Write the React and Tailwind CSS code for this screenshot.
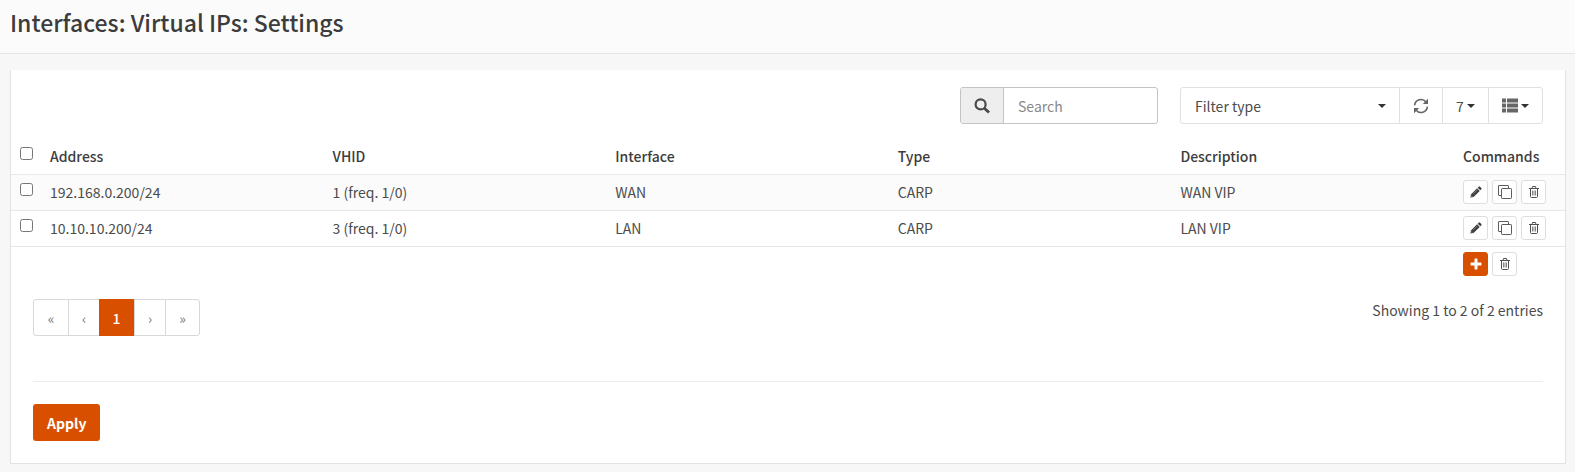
const th = "px-[5px] text-left font-medium";
const td = "px-[5px] border-t border-[#e8e8e8]";

const rows = [
  { address: "192.168.0.200/24", vhid: "1 (freq. 1/0)", iface: "WAN", type: "CARP", description: "WAN VIP" },
  { address: "10.10.10.200/24", vhid: "3 (freq. 1/0)", iface: "LAN", type: "CARP", description: "LAN VIP" },
];

function SearchIcon() {
  return (
    <svg viewBox="0 0 16 16" className="size-4" fill="none" stroke="#4a4a4a" aria-hidden="true">
      <circle cx="6.6" cy="6.4" r="5" strokeWidth="2.2" />
      <path d="M10.4 10.2 15 14.6" strokeWidth="2.8" />
    </svg>
  );
}

function RefreshIcon() {
  return (
    <svg viewBox="0 0 16 16" className="size-4" fill="none" stroke="#666" strokeWidth="1.6" aria-hidden="true">
      <path d="M1.6 7.4A6.4 6.4 0 0 1 13 4" />
      <path d="M14.4 8.6A6.4 6.4 0 0 1 3 12" />
      <path d="M15 .8V6H9.8Z" fill="#666" stroke="none" />
      <path d="M1 15.2V10H6.2Z" fill="#666" stroke="none" />
    </svg>
  );
}

function ListIcon() {
  return (
    <svg viewBox="0 0 16 15" className="h-[15px] w-4" fill="#666" aria-hidden="true">
      <path d="M0 .5h4v4H0zM5 .5h11v4H5zM0 5.5h4v4H0zM5 5.5h11v4H5zM0 10.5h4v4H0zM5 10.5h11v4H5z" />
    </svg>
  );
}

function Caret() {
  return (
    <svg viewBox="0 0 8 4" className="h-1 w-2" fill="#333" aria-hidden="true">
      <path d="M0 0h8L4 4Z" />
    </svg>
  );
}

function PencilIcon() {
  return (
    <svg viewBox="0 0 12 12" className="size-3" fill="#3c3c3c" aria-hidden="true">
      <path d="M8.7.7a.9.9 0 0 1 1.3 0l1.3 1.3a.9.9 0 0 1 0 1.3l-1 1L7.7 1.7Z" />
      <path d="M7.1 2.3 9.7 4.9 3.5 11.1.4 11.6.9 8.5ZM1.7 9.2l-.2 1.3 1.2-.2Z" fillRule="evenodd" />
      <path d="M3.2 8 7.4 3.8" stroke="#aaa" strokeWidth=".6" />
    </svg>
  );
}

function CloneIcon() {
  return (
    <svg viewBox="0 0 14 14" className="size-[14px]" fill="none" stroke="#5c5c5c" strokeWidth="1" aria-hidden="true">
      <path d="M3.5 10.5H1a.5.5 0 0 1-.5-.5V1A.5.5 0 0 1 1 .5h9a.5.5 0 0 1 .5.5v2.500" />
      <rect x="3.5" y="3.5" width="10" height="10" rx=".7" />
    </svg>
  );
}

function TrashIcon() {
  return (
    <svg viewBox="0 0 12 12" className="size-3" fill="none" stroke="#505050" aria-hidden="true">
      <path d="M1 2.500h10M4 2.4 4.500.5h3L8 2.400" />
      <path d="M2.500 2.800v7.600c0 .6.4 1.100 1 1.100h5c.6 0 1-.5 1-1.100V2.800" />
      <path d="M4.500 4.500v5M6 4.500v5M7.500 4.500v5" strokeWidth=".7" />
    </svg>
  );
}

function PlusIcon() {
  return (
    <svg viewBox="0 0 12 12" className="size-3" fill="#fff" aria-hidden="true">
      <path d="M4.5 1.2q0-.6.6-.6h1.8q.6 0 .6.6v3.3h3.3q.6 0 .6.6v1.8q0 .6-.6.6H7.5v3.3q0 .6-.6.6H5.1q-.6 0-.6-.6V7.5H1.2q-.6 0-.6-.6V5.1q0-.6.6-.6h3.3z" />
    </svg>
  );
}

function IconButton({ label, primary, children }) {
  return (
    <button
      type="button"
      aria-label={label}
      className={
        "flex h-6 w-[25px] items-center justify-center rounded-[3px] border " +
        (primary ? "border-[#d94f00] bg-[#d94f00]" : "border-[#dedede] bg-white")
      }
    >
      {children}
    </button>
  );
}

function Check({ label }) {
  return <input type="checkbox" aria-label={label} className="mb-[5px] block size-[13px]" />;
}

function PageButton({ label, wide, children }) {
  return (
    <button
      type="button"
      aria-label={label}
      className={"h-full border-l border-[#d8d8d8] text-[#777] first:border-l-0 " + (wide ? "w-[34px]" : "w-[31px]")}
    >
      {children}
    </button>
  );
}

export default function App() {
  return (
    <div className="min-h-screen bg-[#f7f7f7] pb-2 font-['Noto_Sans_CJK_SC','Noto_Sans',sans-serif] text-[14px] leading-5 text-[#4c4c4c]">
      <header className="border-b border-[#e6e6e6] bg-[#fbfbfb] px-[10px] pt-[6px] pb-[15px]">
        <h1 className="text-[23px] leading-8 font-medium text-[#3c3c3c]">Interfaces: Virtual IPs: Settings</h1>
      </header>

      <main className="mr-[9px] ml-[10px] mt-4 border border-t-0 border-[#e2e2e2] bg-white">
        <div className="flex justify-end gap-[22px] px-[22px] pt-[17px]">
          <label className="flex h-[37px] w-[198px] overflow-hidden rounded-[3px] border border-[#c4c4c4]">
            <span className="flex w-[43px] shrink-0 items-center justify-center border-r border-[#c4c4c4] bg-[#eee]">
              <SearchIcon />
            </span>
            <input
              type="text"
              aria-label="Search"
              placeholder="Search"
              className="min-w-0 flex-1 px-[14px] placeholder:text-[#888]"
            />
          </label>

          <div className="flex h-[37px] rounded-[3px] border border-[#e0e0e0]">
            <div className="grid w-[218px] items-center">
              <select
                aria-label="Filter type"
                className="col-start-1 row-start-1 h-full w-full appearance-none bg-transparent px-[14px]"
              >
                <option>Filter type</option>
              </select>
              <span className="pointer-events-none col-start-1 row-start-1 mr-[13px] justify-self-end">
                <Caret />
              </span>
            </div>
            <button type="button" aria-label="Refresh" className="flex w-[43px] items-center justify-center border-l border-[#e0e0e0]">
              <RefreshIcon />
            </button>
            <button type="button" className="flex w-[46px] items-center justify-center gap-[3px] border-l border-[#e0e0e0]">
              7 <Caret />
            </button>
            <button type="button" aria-label="Columns" className="flex w-[54px] items-center justify-center gap-[3px] border-l border-[#e0e0e0]">
              <ListIcon />
              <Caret />
            </button>
          </div>
        </div>

        <table className="mt-[14px] w-full table-fixed border-collapse">
          <thead>
            <tr className="h-9 text-[#3c3c3c]">
              <th className="w-[34px] pl-[9px]">
                <Check label="Select all" />
              </th>
              <th className={th}>Address</th>
              <th className={th}>VHID</th>
              <th className={th}>Interface</th>
              <th className={th}>Type</th>
              <th className={th}>Description</th>
              <th className={th + " w-[107px]"}>Commands</th>
            </tr>
          </thead>
          <tbody>
            {rows.map((row) => (
              <tr key={row.address} className="h-9 odd:bg-[#fbfbfb]">
                <td className="border-t border-[#e8e8e8] pl-[9px]">
                  <Check label={"Select " + row.address} />
                </td>
                <td className={td}>{row.address}</td>
                <td className={td}>{row.vhid}</td>
                <td className={td}>{row.iface}</td>
                <td className={td}>{row.type}</td>
                <td className={td}>{row.description}</td>
                <td className={td}>
                  <div className="flex gap-1">
                    <IconButton label="Edit"><PencilIcon /></IconButton>
                    <IconButton label="Clone"><CloneIcon /></IconButton>
                    <IconButton label="Delete"><TrashIcon /></IconButton>
                  </div>
                </td>
              </tr>
            ))}
          </tbody>
          <tfoot>
            <tr className="h-9">
              <td colSpan={6} className="border-t border-[#e8e8e8]" />
              <td className={td}>
                <div className="flex gap-1">
                  <IconButton label="Add" primary><PlusIcon /></IconButton>
                  <IconButton label="Delete selected"><TrashIcon /></IconButton>
                </div>
              </td>
            </tr>
          </tfoot>
        </table>

        <div className="mx-[22px] mt-[17px] flex items-start justify-between">
          <nav aria-label="Pagination" className="flex h-[37px] rounded-[3px] border border-[#d8d8d8]">
            <PageButton label="First" wide>«</PageButton>
            <PageButton label="Previous">‹</PageButton>
            <button type="button" aria-current="page" className="-my-px h-[37px] w-[35px] bg-[#d94f00] font-medium text-white">
              1
            </button>
            <PageButton label="Next">›</PageButton>
            <PageButton label="Last" wide>»</PageButton>
          </nav>
          <p className="mt-px">Showing 1 to 2 of 2 entries</p>
        </div>

        <div className="mx-[22px] mt-[45px] border-t border-[#ececec] py-[22px]">
          <button type="button" className="h-[37px] rounded-[3px] bg-[#d94f00] px-[14px] font-bold text-white">
            Apply
          </button>
        </div>
      </main>
    </div>
  );
}
